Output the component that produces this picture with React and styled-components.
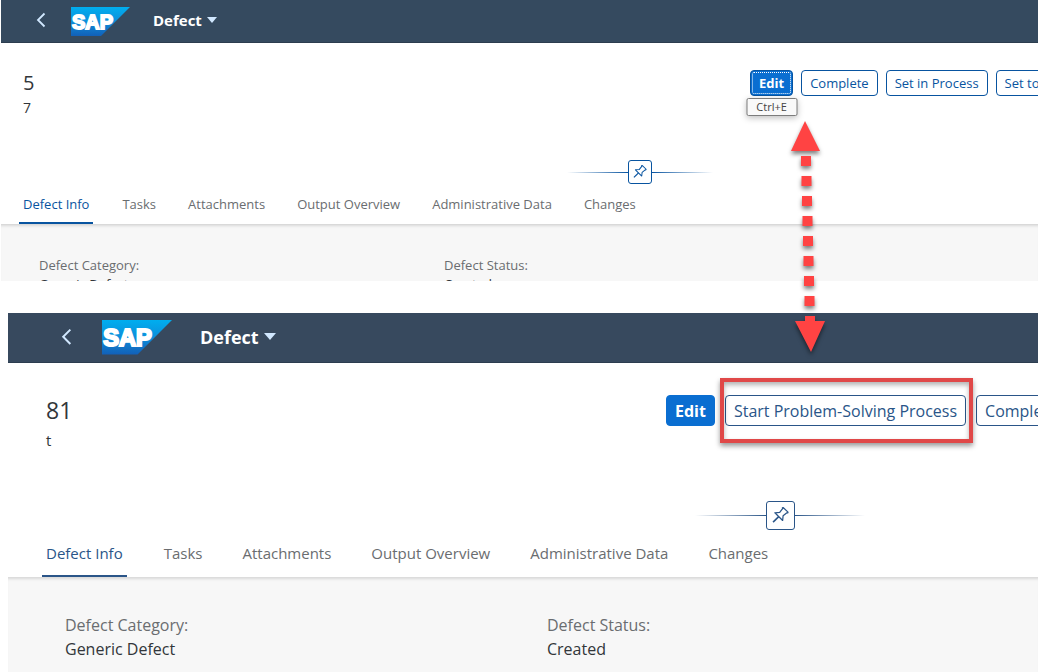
import styled, { createGlobalStyle, css, ThemeProvider } from 'styled-components';

const compact = {
  left: 1,
  shellHeight: 43,
  shellColor: '#354a5f',
  backLeft: 35,
  backWidth: 10,
  backGap: 25,
  logoWidth: 59,
  logoGap: 23,
  titleSize: 15,
  caret: 5,
  headerTop: 27,
  headerLeft: 22,
  controlHeight: 26,
  actionsWidth: 288,
  actionGap: 8,
  controlSize: 13,
  idSize: 20,
  subSize: 14,
  lineHeight: 19,
  snapTop: 43,
  snapWidth: 146,
  snapRight: 325,
  pinSize: 24,
  tabSize: 13,
  tabHeight: 40,
  tabGap: 26,
  bodyTop: 31,
  bodyLeft: 38,
  bodySize: 13,
  columns: '405fr 594fr',
  accent: '#0854a0',
  line: '#d9d9d9'
};

const large = {
  left: 8,
  shellHeight: 50,
  shellColor: '#37495e',
  backLeft: 53,
  backWidth: 11,
  backGap: 30,
  logoWidth: 70,
  logoGap: 28,
  titleSize: 18,
  caret: 6,
  headerTop: 32,
  headerLeft: 38,
  controlHeight: 31,
  actionsWidth: 372,
  actionGap: 10,
  controlSize: 16,
  idSize: 23,
  subSize: 15,
  lineHeight: 24,
  snapTop: 49,
  snapWidth: 170,
  snapRight: 173,
  pinSize: 29,
  tabSize: 15,
  tabHeight: 47,
  tabGap: 34,
  bodyTop: 35,
  bodyLeft: 57,
  bodySize: 16,
  columns: '482fr 491fr',
  accent: '#2a5588',
  line: '#dcdcdc'
};

const TABS = ['Defect Info', 'Tasks', 'Attachments', 'Output Overview', 'Administrative Data', 'Changes'];

function SapLogo({ id }) {
  return (
    <Logo viewBox="0 0 59 29" role="img" aria-label="SAP">
      <defs>
        <linearGradient id={id} x1="0" y1="0" x2="0" y2="1">
          <stop offset="0" stopColor="#00aeef" />
          <stop offset="0.5" stopColor="#0d8fdb" />
          <stop offset="1" stopColor="#1260b8" />
        </linearGradient>
      </defs>
      <path d="M0 0H59L30 29H0Z" fill={`url(#${id})`} />
      <text
        x="1"
        y="22"
        fill="#fff"
        stroke="#fff"
        strokeWidth="1.8"
        fontFamily="Liberation Sans, sans-serif"
        fontWeight="700"
        fontSize="20"
      >
        SAP
      </text>
    </Logo>
  );
}

function PinIcon() {
  return (
    <svg viewBox="0 0 24 24" fill="none" stroke="currentColor" strokeWidth="1.1" strokeLinejoin="round">
      <path d="M7 9.6L11.3 9.2L13.9 5.9L13.7 5.2L14.3 4.9L18.7 9L18.4 9.7L17.7 9.6L14.3 12.3L13.9 16.4Z" />
      <path d="M10.4 13L5.4 17.9" strokeWidth="1.4" />
    </svg>
  );
}

function DefectPage({ id, number, subtitle, clipped, children }) {
  return (
    <Panel>
      <Shell>
        <BackButton type="button" aria-label="Back">
          <svg viewBox="0 0 10 16" fill="none" stroke="currentColor" strokeWidth="1.8">
            <path d="M8.5 1.5L2 8L8.5 14.5" />
          </svg>
        </BackButton>
        <SapLogo id={id} />
        <ShellTitle type="button">
          Defect
          <Caret />
        </ShellTitle>
      </Shell>
      <Header>
        <div>
          <ObjectId>{number}</ObjectId>
          <Subtitle>{subtitle}</Subtitle>
        </div>
        <Actions>{children}</Actions>
      </Header>
      <Snap>
        <SnapLine $to="right" />
        <PinButton type="button" aria-label="Pin header">
          <PinIcon />
        </PinButton>
        <SnapLine $to="left" />
      </Snap>
      <Tabs>
        {TABS.map((tab, i) => (
          <Tab key={tab} href="#" $active={i === 0}>
            {tab}
          </Tab>
        ))}
      </Tabs>
      <Body $clipped={clipped}>
        <Field>
          <dt>Defect Category:</dt>
          <dd>Generic Defect</dd>
        </Field>
        <Field>
          <dt>Defect Status:</dt>
          <dd>Created</dd>
        </Field>
      </Body>
    </Panel>
  );
}

function Arrow() {
  const dashes = [0, 1, 2, 3, 4, 5, 6, 7];
  return (
    <ArrowOverlay width="46" height="252" viewBox="0 0 46 252" fill="#ff4343" aria-hidden="true">
      <path d="M19 7L34 37H5Z" />
      {dashes.map((i) => (
        <rect key={i} x={15 + i * 0.5} y={42 + i * 20} width="10" height="10" />
      ))}
      <path d="M19 202H29V207H39L25 238L9 207H19Z" />
    </ArrowOverlay>
  );
}

function App() {
  return (
    <Page>
      <GlobalStyle />
      <ThemeProvider theme={compact}>
        <DefectPage id="logo-top" number="5" subtitle="7" clipped>
          <Anchor>
            <ActionButton type="button" $primary $focused>
              Edit
            </ActionButton>
            <Tooltip role="tooltip">Ctrl+E</Tooltip>
          </Anchor>
          <ActionButton type="button">Complete</ActionButton>
          <ActionButton type="button">Set in Process</ActionButton>
          <ActionButton type="button">Set to Completed</ActionButton>
        </DefectPage>
      </ThemeProvider>
      <ThemeProvider theme={large}>
        <DefectPage id="logo-bottom" number="81" subtitle="t">
          <ActionButton type="button" $primary>
            Edit
          </ActionButton>
          <Anchor>
            <ActionButton type="button">Start Problem-Solving Process</ActionButton>
            <Highlight />
          </Anchor>
          <ActionButton type="button">Complete</ActionButton>
        </DefectPage>
      </ThemeProvider>
      <Arrow />
    </Page>
  );
}

export default App;

const GlobalStyle = createGlobalStyle`
  * {
    box-sizing: border-box;
  }
  body {
    margin: 0;
    background: #fff;
    font-family: 'Open Sans', 'Noto Sans', sans-serif;
  }
  button {
    font-family: inherit;
    cursor: pointer;
  }
`;

const Page = styled.div`
  position: relative;
  display: flex;
  flex-direction: column;
  gap: 32px;
  min-height: 100vh;
  overflow: hidden;
`;

const Panel = styled.section`
  display: flex;
  flex-direction: column;
  margin-left: ${({ theme }) => theme.left}px;

  &:last-of-type {
    flex: 1;
  }
`;

const Shell = styled.header`
  display: flex;
  align-items: center;
  height: ${({ theme }) => theme.shellHeight}px;
  padding-left: ${({ theme }) => theme.backLeft}px;
  background: ${({ theme }) => theme.shellColor};
  border-bottom: 1px solid #2c3d4f;
`;

const BackButton = styled.button`
  display: flex;
  width: ${({ theme }) => theme.backWidth}px;
  margin-right: ${({ theme }) => theme.backGap}px;
  padding: 0 0 2px;
  border: 0;
  background: none;
  color: #d1e8ff;

  svg {
    width: 100%;
  }
`;

const Logo = styled.svg`
  width: ${({ theme }) => theme.logoWidth}px;
  margin-right: ${({ theme }) => theme.logoGap}px;
`;

const ShellTitle = styled.button`
  display: flex;
  align-items: center;
  gap: 5px;
  padding: 0 0 2px;
  border: 0;
  background: none;
  color: #fff;
  font-size: ${({ theme }) => theme.titleSize}px;
  font-weight: 700;
  line-height: 24px;
`;

const Caret = styled.span`
  border: ${({ theme }) => theme.caret}px solid transparent;
  border-top: ${({ theme }) => theme.caret + 1}px solid #d1e8ff;
  border-bottom: 0;
`;

const Header = styled.div`
  display: flex;
  justify-content: space-between;
  padding-top: ${({ theme }) => theme.headerTop}px;
  padding-left: ${({ theme }) => theme.headerLeft}px;
  color: #32363a;
`;

const ObjectId = styled.h1`
  margin: 0 0 2px;
  font-size: ${({ theme }) => theme.idSize}px;
  font-weight: 400;
  line-height: ${({ theme }) => theme.controlHeight}px;
`;

const Subtitle = styled.p`
  margin: 0;
  font-size: ${({ theme }) => theme.subSize}px;
  line-height: ${({ theme }) => theme.lineHeight}px;
`;

const Actions = styled.div`
  display: flex;
  align-items: flex-start;
  gap: ${({ theme }) => theme.actionGap}px;
  width: ${({ theme }) => theme.actionsWidth}px;
`;

const Anchor = styled.div`
  position: relative;
  flex: none;
`;

const ActionButton = styled.button`
  display: block;
  flex: none;
  height: ${({ theme }) => theme.controlHeight}px;
  padding: 0 8px;
  border: 1px solid ${({ theme }) => theme.accent};
  border-radius: 4px;
  background: #fff;
  color: ${({ theme }) => theme.accent};
  font-size: ${({ theme }) => theme.controlSize}px;
  line-height: 20px;
  white-space: nowrap;

  ${({ $primary }) =>
    $primary &&
    css`
      border-color: #0a6ed1;
      background: #0a6ed1;
      color: #fff;
      font-weight: 700;
    `}

  ${({ $focused }) =>
    $focused &&
    css`
      border-color: #0854a0;
      outline: 1px dotted #fff;
      outline-offset: -3px;
    `}
`;

const Tooltip = styled.span`
  position: absolute;
  top: 100%;
  left: 50%;
  width: 51px;
  margin-top: 2px;
  border: 1px solid #7c7c7c;
  border-radius: 2px;
  background: #f9f9f9;
  box-shadow: 0 2px 6px rgba(0, 0, 0, 0.25);
  color: #444;
  font-size: 11px;
  line-height: 16px;
  text-align: center;
  transform: translateX(-50%);
`;

const Highlight = styled.span`
  position: absolute;
  inset: -17px -7px -17px -5px;
  border: 4px solid #e04848;
  box-shadow:
    0 3px 5px rgba(0, 0, 0, 0.4),
    inset 0 3px 5px rgba(0, 0, 0, 0.3);
  pointer-events: none;
`;

const Snap = styled.div`
  display: flex;
  align-items: center;
  align-self: flex-end;
  width: ${({ theme }) => theme.snapWidth}px;
  margin-top: ${({ theme }) => theme.snapTop}px;
  margin-right: ${({ theme }) => theme.snapRight}px;
`;

const SnapLine = styled.span`
  flex: 1;
  height: 1px;
  background: linear-gradient(to ${({ $to }) => $to}, transparent, ${({ theme }) => theme.accent});
`;

const PinButton = styled.button`
  display: flex;
  width: ${({ theme }) => theme.pinSize}px;
  height: ${({ theme }) => theme.pinSize}px;
  padding: 0;
  border: 1px solid ${({ theme }) => theme.accent};
  border-radius: 3px;
  background: #fff;
  color: ${({ theme }) => theme.accent};

  svg {
    width: 100%;
    height: 100%;
  }
`;

const Tabs = styled.nav`
  display: flex;
  gap: ${({ theme }) => theme.tabGap}px;
  padding-left: ${({ theme }) => theme.headerLeft - 4}px;
`;

const Tab = styled.a`
  height: ${({ theme }) => theme.tabHeight}px;
  padding: 0 ${({ $active }) => ($active ? 4 : 3)}px;
  border-bottom: 2px solid ${({ $active, theme }) => ($active ? theme.accent : 'transparent')};
  color: ${({ $active, theme }) => ($active ? theme.accent : '#6a6d70')};
  font-size: ${({ theme }) => theme.tabSize}px;
  line-height: ${({ theme }) => theme.tabHeight}px;
  text-decoration: none;
  white-space: nowrap;
`;

const Body = styled.dl`
  display: grid;
  grid-template-columns: ${({ theme }) => theme.columns};
  flex: 1;
  align-content: start;
  margin: 0;
  padding-top: ${({ theme }) => theme.bodyTop}px;
  padding-left: ${({ theme }) => theme.bodyLeft}px;
  border-top: 1px solid ${({ theme }) => theme.line};
  background: #f7f7f7;
  box-shadow: inset 0 3px 3px -2px rgba(0, 0, 0, 0.12);

  ${({ $clipped }) =>
    $clipped &&
    css`
      flex: none;
      height: 57px;
      overflow: hidden;
    `}
`;

const Field = styled.div`
  font-size: ${({ theme }) => theme.bodySize}px;
  line-height: ${({ theme }) => theme.lineHeight}px;

  dt {
    color: #6a6d70;
  }
  dd {
    margin: 0;
    color: #32363a;
  }
`;

const ArrowOverlay = styled.svg`
  position: absolute;
  top: 114px;
  right: 206px;
  filter: drop-shadow(0 3px 2px rgba(0, 0, 0, 0.5));
  pointer-events: none;
`;
